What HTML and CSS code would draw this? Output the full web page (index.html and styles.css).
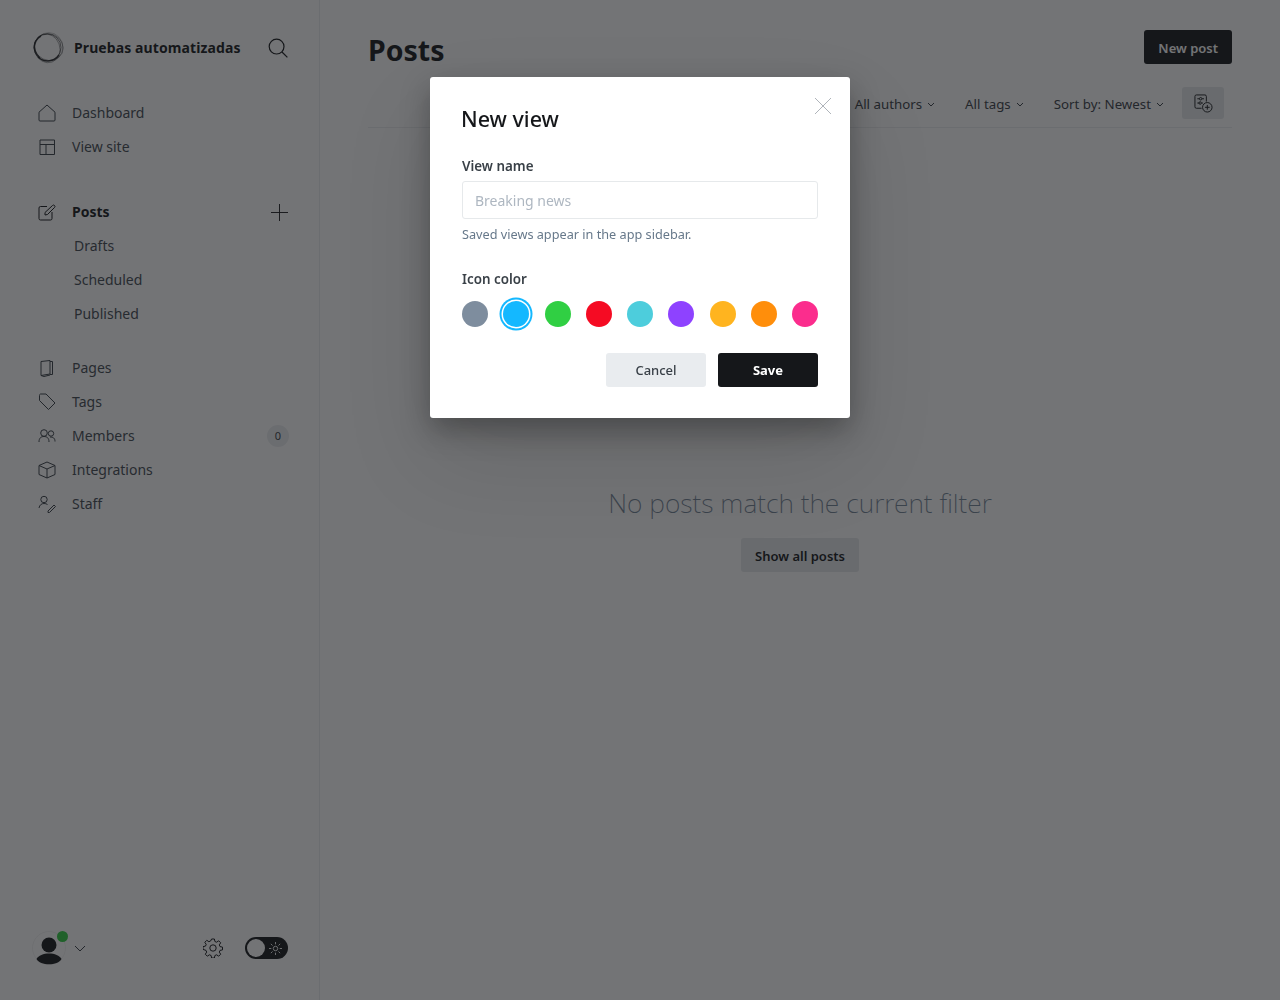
FILE: index.html
```html
<!DOCTYPE html>
<html lang="es">

<head>
  <meta charset="utf-8">
  <title>Posts</title>
  <link rel="stylesheet" href="styles.css">
</head>

<body>
  <div class="app">
    <!-- sidebar -->
    <nav class="sidebar">
      <div class="brand">
        <svg class="logo" viewBox="0 0 32 32" fill="none" stroke="#15171a">
          <path d="M8 26C3 22 0.500 15 4 9c1-2 3-4 5-5" stroke-width="1.500" opacity=".8" />
          <path d="M6 25c6 6 16 5 21-2" stroke-width="1.300" opacity=".8" />
          <ellipse cx="15.500" cy="15.500" rx="13.500" ry="13.500" stroke-width="1" opacity=".55" />
          <ellipse cx="16.300" cy="14.800" rx="14.600" ry="13.200" stroke-width=".8" opacity=".45" transform="rotate(25 16 16)" />
          <ellipse cx="15" cy="16" rx="12.800" ry="14.600" stroke-width=".8" opacity=".45" transform="rotate(-20 16 16)" />
          <ellipse cx="16.800" cy="15" rx="14" ry="14.400" stroke-width=".6" opacity=".4" />
        </svg>
        <span class="brand-name">Pruebas automatizadas</span>
        <svg class="search" viewBox="0 0 20 20" fill="none" stroke="#15171a" stroke-width="1.200">
          <circle cx="8.600" cy="8.600" r="7.400" />
          <path d="M14 14l5.400 5.400" />
        </svg>
      </div>

      <ul class="menu first">
        <li class="item">
          <svg class="icon" viewBox="0 0 18 18"><path d="M1 8.200 9 1l8 7.200V16a1 1 0 0 1-1 1H2a1 1 0 0 1-1-1z" /></svg>
          Dashboard
        </li>
        <li class="item">
          <svg class="icon" viewBox="0 0 18 18"><path d="M2 2h14.500v14.500H2zM2 6.500h14.500M8 6.500v10" /></svg>
          View site
        </li>
      </ul>

      <ul class="menu posts">
        <li class="item active">
          <svg class="icon" viewBox="0 0 18 18"><path d="M9 3.500H2.500A1.500 1.500 0 0 0 1 5v10.500A1.500 1.500 0 0 0 2.500 17h10a1.500 1.500 0 0 0 1.500-1.500V9M7 9.500 7 12l2.500-.5 7-7a1.400 1.400 0 0 0-2-2z" /></svg>
          Posts
          <svg class="plus" viewBox="0 0 18 18"><path d="M9 0v18M0 9h18" /></svg>
        </li>
        <li class="item sub">Drafts</li>
        <li class="item sub">Scheduled</li>
        <li class="item sub">Published</li>
      </ul>

      <ul class="menu second">
        <li class="item">
          <svg class="icon" viewBox="0 0 18 18"><path d="M3 2.500 12 1.500V15l-9 1.500zM12 2.500h2.500V15.500H12M3 16.500l3 1 6-1.500" /></svg>
          Pages
        </li>
        <li class="item">
          <svg class="icon" viewBox="0 0 18 18"><path d="M2.500 1H8l9 9-6.500 6.500-9-9V2.500A1.500 1.500 0 0 1 2.500 1z" /></svg>
          Tags
        </li>
        <li class="item">
          <svg class="icon" viewBox="0 0 18 18"><circle cx="6" cy="6" r="3.300" /><circle cx="13" cy="6.500" r="2.700" /><path d="M1 15c0-4 2-5.500 5-5.500S11 11 11 15M12 10c3 0 5 1 5 4.500" /></svg>
          Members
          <span class="count">0</span>
        </li>
        <li class="item">
          <svg class="icon" viewBox="0 0 18 18"><path d="M9 1l8 3.500v9L9 17l-8-3.500v-9zM1 4.500 9 8l8-3.500M9 8v9" /></svg>
          Integrations
        </li>
        <li class="item">
          <svg class="icon" viewBox="0 0 18 18"><circle cx="6" cy="4.500" r="3.200" /><path d="M1 13c.5-3 2.500-4.500 5-4.500 1.500 0 2.500.4 3.500 1M10 16l6-6 1.500 1.500-6 6H10z" /></svg>
          Staff
        </li>
      </ul>

      <div class="sidebar-foot">
        <div class="user">
          <svg class="avatar" viewBox="0 0 34 34">
            <circle cx="17" cy="17" r="16.500" fill="none" stroke="#15171a" stroke-width=".5" opacity=".1" />
            <circle cx="17" cy="14" r="7.500" fill="#15171a" />
            <path d="M4.500 28C8 20.500 26 20.500 29.500 28 26 35 8 35 4.500 28z" fill="#15171a" />
          </svg>
          <span class="dot"></span>
          <svg class="caret" viewBox="0 0 12 7"><path d="M1 1l5 5 5-5" /></svg>
        </div>
        <svg class="gear" viewBox="0 0 20 20" fill="none" stroke="#15171a" stroke-width="1">
          <circle cx="10" cy="10" r="3.200" />
          <path d="M8.600 1h2.800l.5 2.500 1.700.7 2.100-1.400 2 2-1.400 2.100.7 1.700 2.500.5v2.800l-2.500.5-.7 1.700 1.400 2.100-2 2-2.100-1.400-1.700.7-.5 2.500H8.600l-.5-2.500-1.700-.7-2.100 1.400-2-2 1.400-2.100-.7-1.700L0 11.400V8.600l2.500-.5.700-1.700L1.800 4.300l2-2 2.100 1.400 1.700-.7z" />
        </svg>
        <div class="toggle">
          <span class="knob"></span>
          <svg class="sun" viewBox="0 0 14 14" fill="none" stroke="#fff" stroke-width="1">
            <circle cx="7" cy="7" r="2.400" />
            <path d="M7 0v2.500M7 11.500V14M0 7h2.500M11.500 7H14M2 2l1.800 1.800M10.200 10.200 12 12M2 12l1.800-1.800M10.200 3.800 12 2" />
          </svg>
        </div>
      </div>
    </nav>

    <!-- main -->
    <main class="content">
      <header class="top">
        <h1 class="title">Posts</h1>
        <button class="btn btn-dark new-post">New post</button>
      </header>
      <div class="filters">
        <span class="filter">All authors<svg viewBox="0 0 8 5"><path d="M1 1l3 3 3-3" /></svg></span>
        <span class="filter">All tags<svg viewBox="0 0 8 5"><path d="M1 1l3 3 3-3" /></svg></span>
        <span class="filter">Sort by: Newest<svg viewBox="0 0 8 5"><path d="M1 1l3 3 3-3" /></svg></span>
        <span class="view-btn">
          <svg viewBox="0 0 20 20" fill="none" stroke="#15171a" stroke-width="1">
            <path d="M8 15H2.500A1.500 1.500 0 0 1 1 13.500v-11A1.500 1.500 0 0 1 2.500 1h9A1.500 1.500 0 0 1 13 2.500V8" />
            <path d="M3.500 5h2M8.500 5h2M3.500 9.500h2M8.500 9.500h1" />
            <circle cx="7" cy="5" r="1.300" />
            <circle cx="6.500" cy="9.500" r="1.300" />
            <circle cx="14" cy="14" r="5" />
            <path d="M14 11.500v5M11.500 14h5" />
          </svg>
        </span>
      </div>
      <section class="empty">
        <h3 class="empty-text">No posts match the current filter</h3>
        <button class="btn btn-light show-all">Show all posts</button>
      </section>
    </main>
  </div>

  <!-- modal -->
  <div class="overlay">
    <div class="modal">
      <svg class="close" viewBox="0 0 18 18"><path d="M1 1l16 16M17 1 1 17" /></svg>
      <h2 class="modal-title">New view</h2>
      <label class="label">View name</label>
      <input class="input" type="text" placeholder="Breaking news">
      <p class="hint">Saved views appear in the app sidebar.</p>
      <label class="label color-label">Icon color</label>
      <div class="colors">
        <span class="swatch c-grey"></span>
        <span class="swatch c-blue selected"></span>
        <span class="swatch c-green"></span>
        <span class="swatch c-red"></span>
        <span class="swatch c-teal"></span>
        <span class="swatch c-purple"></span>
        <span class="swatch c-yellow"></span>
        <span class="swatch c-orange"></span>
        <span class="swatch c-pink"></span>
      </div>
      <div class="actions">
        <button class="btn cancel">Cancel</button>
        <button class="btn btn-dark save">Save</button>
      </div>
    </div>
  </div>
</body>

</html>
```

FILE: styles.css
```css
* {
  box-sizing: border-box;
}

html,
body {
  height: 100%;
}

body {
  margin: 0;
  background: #fff;
  color: #15171a;
  font-family: "Noto Sans", "Open Sans", sans-serif;
  font-size: 14px;
}

button {
  font-family: inherit;
}

ul {
  list-style: none;
  margin: 0;
  padding: 0;
}

.app {
  display: grid;
  grid-template-columns: 320px 1fr;
  height: 1000px;
}

/* sidebar */
.sidebar {
  display: flex;
  flex-direction: column;
  border-right: 1px solid #eceef0;
  padding: 32px 31px 32px 32px;
}

.brand {
  display: flex;
  align-items: center;
  height: 32px;
}

.logo {
  width: 32px;
  height: 32px;
  flex: none;
}

.brand-name {
  margin-left: 10px;
  padding-bottom: 2px;
  font-size: 14px;
  font-weight: 700;
  letter-spacing: .1px;
  white-space: nowrap;
}

.search {
  width: 20px;
  height: 20px;
  margin-left: auto;
  margin-bottom: 1px;
}

.menu {
  margin-top: 20px;
}

.menu.first {
  margin-top: 32px;
}

.menu.posts {
  margin-top: 31px;
}

.item {
  display: flex;
  align-items: center;
  height: 34px;
  padding-left: 6px;
  padding-bottom: 2px;
  color: #434a52;
  font-size: 14px;
}

.item.active {
  color: #15171a;
  font-weight: 700;
}

.item.sub {
  padding-left: 42px;
}

.icon {
  width: 18px;
  height: 18px;
  margin-top: 2px;
  margin-right: 16px;
  fill: none;
  stroke: #394047;
  stroke-width: 1;
  flex: none;
}

.active .icon {
  stroke: #15171a;
}

.plus {
  width: 17px;
  height: 17px;
  margin-top: 3px;
  margin-left: auto;
  stroke: #15171a;
  stroke-width: 1;
  fill: none;
}

.count {
  width: 22px;
  height: 22px;
  margin-top: 2px;
  margin-left: auto;
  margin-right: -1px;
  border-radius: 50%;
  background: #eceef0;
  color: #394047;
  font-size: 11px;
  line-height: 22px;
  text-align: center;
}

.sidebar-foot {
  display: flex;
  align-items: center;
  margin-top: auto;
  height: 32px;
  margin-bottom: 4px;
}

.user {
  position: relative;
  display: flex;
  align-items: center;
}

.avatar {
  width: 34px;
  height: 34px;
}

.dot {
  position: absolute;
  top: 0;
  left: 25px;
  width: 11px;
  height: 11px;
  border-radius: 50%;
  background: #30cf43;
}

.caret {
  width: 12px;
  height: 7px;
  margin-left: 8px;
  fill: none;
  stroke: #394047;
}

.gear {
  width: 20px;
  height: 20px;
  margin-left: auto;
}

.toggle {
  display: flex;
  align-items: center;
  width: 43px;
  height: 22px;
  margin-left: 22px;
  padding: 2px;
  border-radius: 11px;
  background: #15171a;
}

.knob {
  width: 18px;
  height: 18px;
  border-radius: 50%;
  background: #fff;
}

.sun {
  width: 13px;
  height: 13px;
  margin-left: 4px;
}

/* main */
.content {
  display: flex;
  flex-direction: column;
  padding: 30px 48px 0;
}

.top {
  display: flex;
  align-items: flex-start;
  justify-content: space-between;
}

.title {
  margin: 0;
  font-size: 28.500px;
  line-height: 40px;
  font-weight: 700;
}

.btn {
  height: 34px;
  padding: 0 14px;
  border: 0;
  border-radius: 3px;
  font-size: 13px;
  font-weight: 600;
}

.btn-dark {
  background: #15171a;
  color: #fff;
}

.btn-light {
  background: #e6e9eb;
  color: #15171a;
}

.new-post,
.show-all {
  padding-top: 1px;
}

.filters {
  display: flex;
  align-items: center;
  justify-content: flex-end;
  height: 41px;
  margin-top: 17px;
  padding-right: 8px;
  padding-bottom: 8px;
  border-bottom: 1px solid #eceef0;
}

.filter {
  display: flex;
  align-items: center;
  margin-right: 30px;
  padding-top: 2px;
  color: #394047;
  font-size: 13.300px;
}

.filter svg {
  width: 8px;
  height: 5px;
  margin-left: 5px;
  fill: none;
  stroke: #394047;
}

.filter:nth-child(3) {
  margin-right: 18px;
}

.view-btn {
  display: flex;
  align-items: center;
  justify-content: center;
  width: 42px;
  height: 32px;
  border-radius: 3px;
  background: #e6e9eb;
}

.view-btn svg {
  width: 19px;
  height: 19px;
}

.empty {
  display: flex;
  flex-direction: column;
  align-items: center;
  margin-top: 356px;
}

.empty-text {
  margin: 0 0 16px;
  color: #738496;
  font-size: 26.500px;
  line-height: 38px;
  font-weight: 200;
}

/* modal */
.overlay {
  position: fixed;
  inset: 0;
  display: flex;
  justify-content: center;
  align-items: flex-start;
  background: rgba(21, 23, 26, .6);
}

.modal {
  position: relative;
  display: flex;
  flex-direction: column;
  width: 420px;
  height: 341px;
  margin-top: 77px;
  padding: 27px 32px 0;
  border-radius: 3px;
  background: #fff;
  box-shadow: 0 12px 30px rgba(0, 0, 0, .3), 0 40px 90px rgba(0, 0, 0, .12);
}

.close {
  position: absolute;
  top: 20px;
  right: 18px;
  width: 18px;
  height: 18px;
  fill: none;
  stroke: #9aa1a8;
  stroke-width: .8;
}

.modal-title {
  margin: 0 0 0 -1px;
  font-size: 21.500px;
  line-height: 30px;
  font-weight: 500;
}

.label {
  margin-top: 23px;
  color: #394047;
  font-size: 13.400px;
  line-height: 18px;
  font-weight: 600;
}

.color-label {
  margin-top: 27px;
}

.input {
  height: 38px;
  margin-top: 6px;
  padding: 0 12px;
  border: 1px solid #e6e9eb;
  border-radius: 3px;
  background: #fff;
  font-family: inherit;
  font-size: 14px;
  outline: 0;
}

.input::placeholder {
  color: #aeb7c1;
}

.hint {
  margin: 6px 0 0;
  color: #66788a;
  font-size: 12.700px;
  line-height: 18px;
}

.colors {
  display: flex;
  align-items: center;
  justify-content: space-between;
  height: 32px;
  margin-top: 10px;
}

.swatch {
  width: 26px;
  height: 26px;
  border-radius: 50%;
}

.swatch.selected {
  box-shadow: 0 0 0 1.500px #fff, 0 0 0 3.500px #14b8ff;
}

.c-grey { background: #7e8d9e; }
.c-blue { background: #14b8ff; }
.c-green { background: #30cf43; }
.c-red { background: #f50b23; }
.c-teal { background: #4dcddc; }
.c-purple { background: #8e42ff; }
.c-yellow { background: #ffb41f; }
.c-orange { background: #ff8e0b; }
.c-pink { background: #fb2d8d; }

.actions {
  display: flex;
  justify-content: flex-end;
  gap: 12px;
  margin-top: 23px;
}

.cancel {
  width: 100px;
  background: #e9ecef;
  color: #394047;
  font-weight: 500;
}

.save {
  width: 100px;
  font-weight: 700;
}
```
